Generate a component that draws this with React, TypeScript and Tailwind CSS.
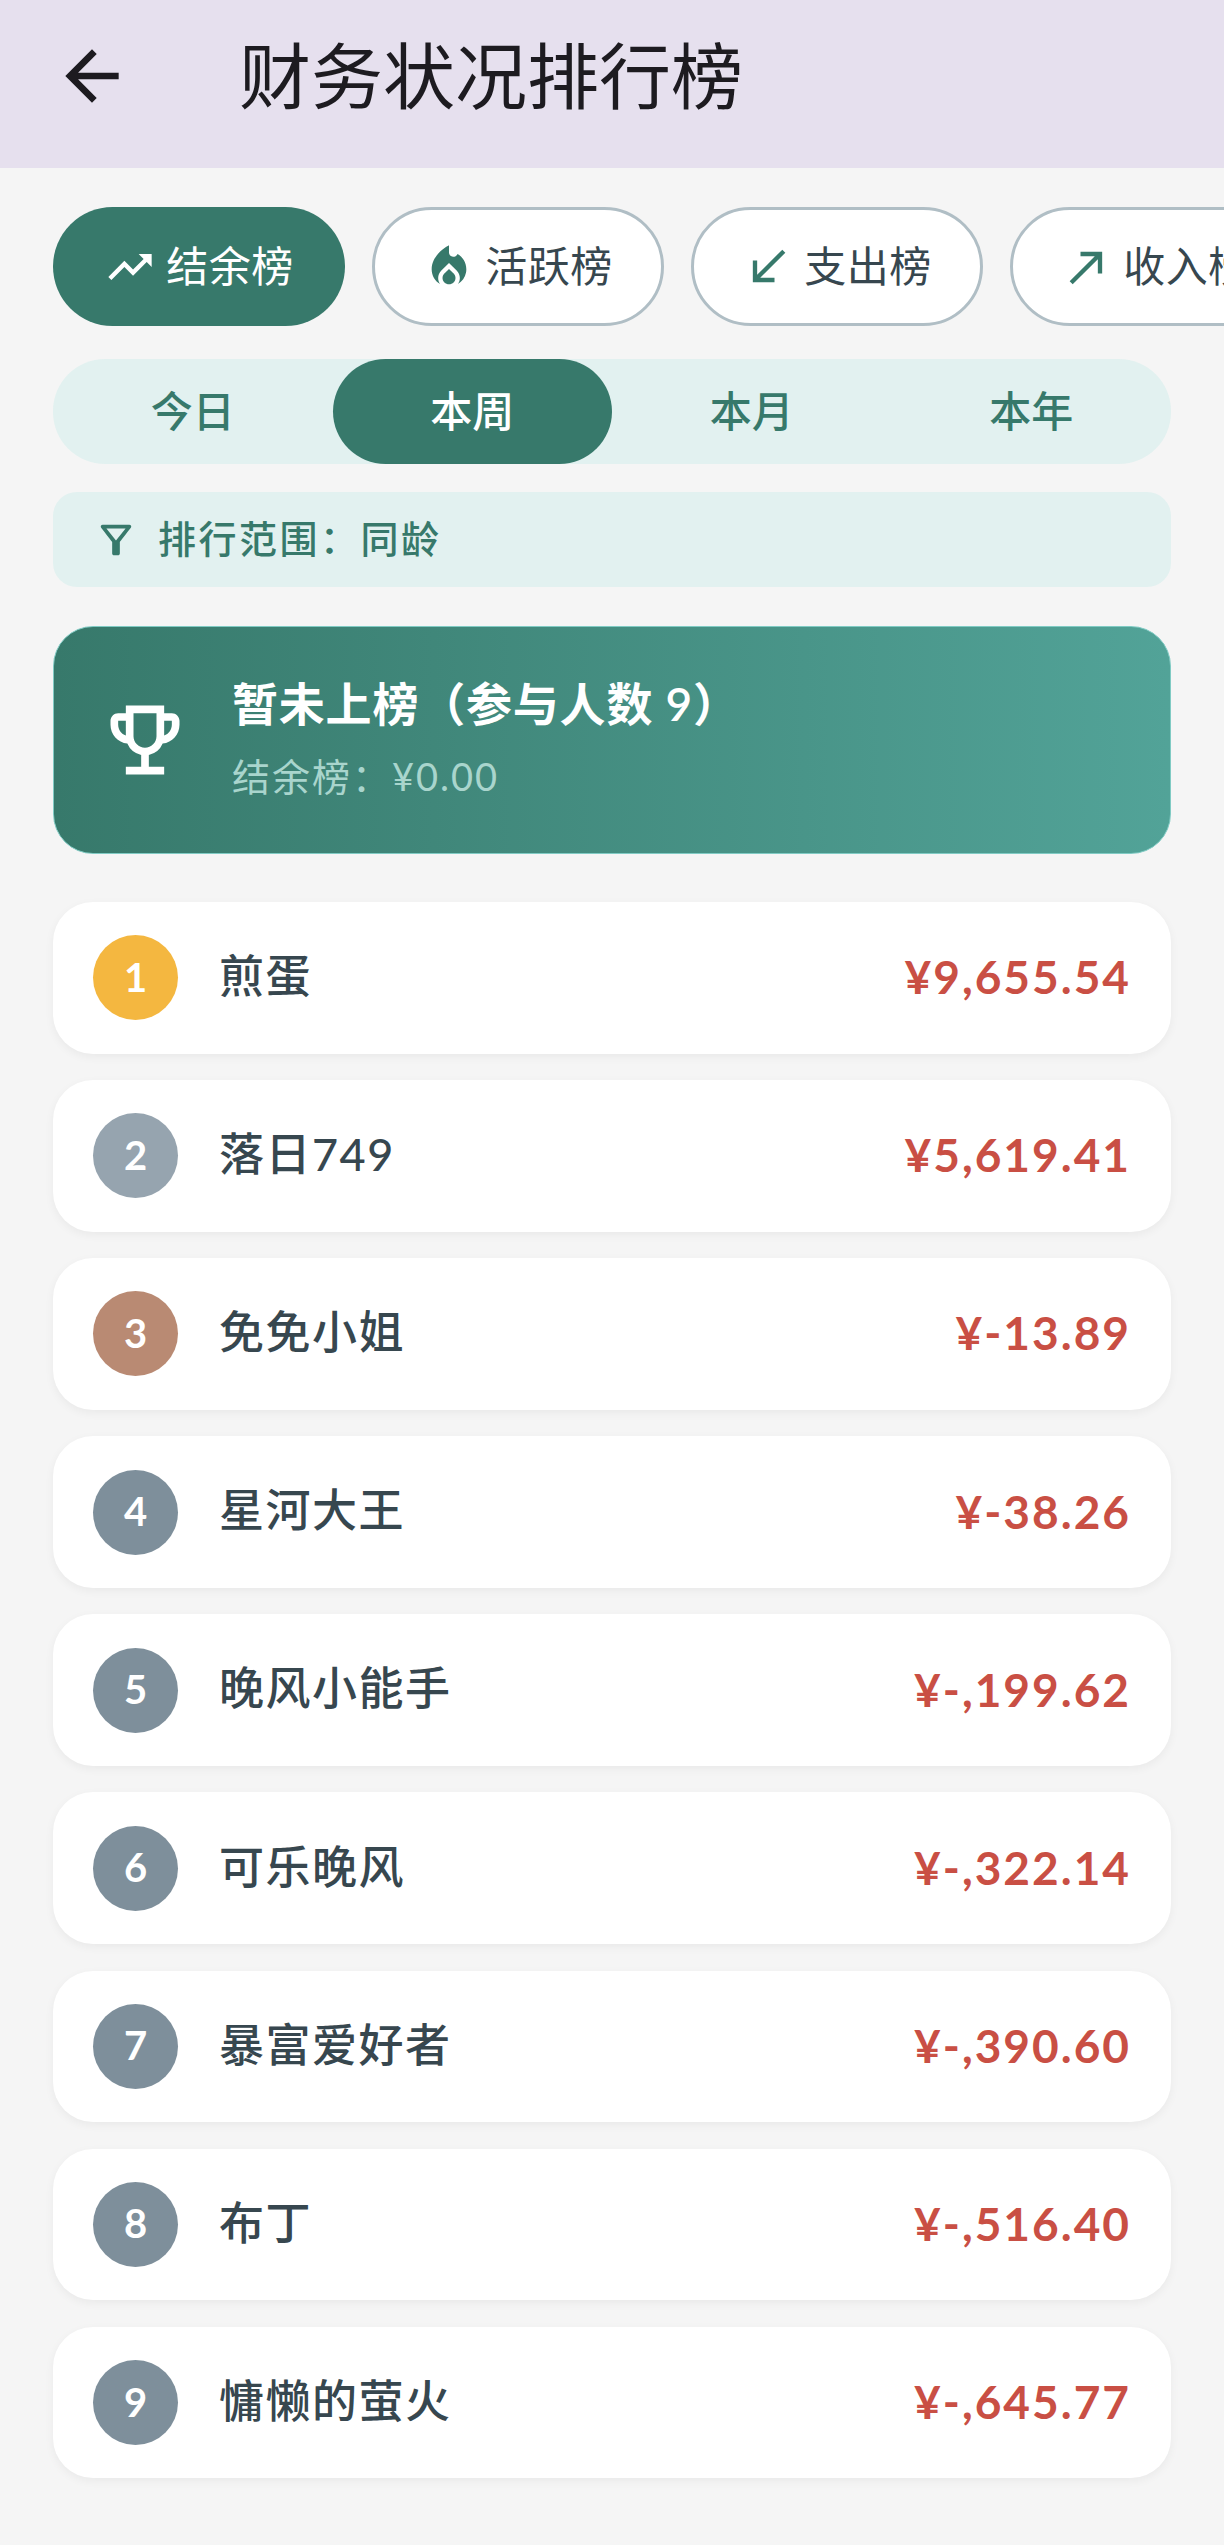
import {
  MdArrowBack,
  MdLocalFireDepartment,
  MdNorthEast,
  MdOutlineEmojiEvents,
  MdOutlineFilterAlt,
  MdSouthWest,
  MdTrendingUp,
} from "react-icons/md";

const tabs = [
  { label: "结余榜", icon: MdTrendingUp, active: true },
  { label: "活跃榜", icon: MdLocalFireDepartment, active: false },
  { label: "支出榜", icon: MdSouthWest, active: false },
  { label: "收入榜", icon: MdNorthEast, active: false },
];

const periods = ["今日", "本周", "本月", "本年"];

const rows = [
  { rank: 1, name: "煎蛋", amount: "¥9,655.54", color: "bg-[#f4b740]" },
  { rank: 2, name: "落日749", amount: "¥5,619.41", color: "bg-[#96a4af]" },
  { rank: 3, name: "免免小姐", amount: "¥-13.89", color: "bg-[#b98a73]" },
  { rank: 4, name: "星河大王", amount: "¥-38.26", color: "bg-[#7e8f9b]" },
  { rank: 5, name: "晚风小能手", amount: "¥-,199.62", color: "bg-[#7e8f9b]" },
  { rank: 6, name: "可乐晚风", amount: "¥-,322.14", color: "bg-[#7e8f9b]" },
  { rank: 7, name: "暴富爱好者", amount: "¥-,390.60", color: "bg-[#7e8f9b]" },
  { rank: 8, name: "布丁", amount: "¥-,516.40", color: "bg-[#7e8f9b]" },
  { rank: 9, name: "慵懒的萤火", amount: "¥-,645.77", color: "bg-[#7e8f9b]" },
];

export default function App() {
  return (
    <div className="h-[2545px] bg-[#f5f5f5] overflow-hidden font-['Lato','Noto_Sans_CJK_SC',sans-serif]">
      <header className="h-[168px] bg-[#e6e0ee] flex items-center pl-[52px] pb-[16px]">
        <MdArrowBack className="w-[80px] h-[80px] text-[#1d1b20] shrink-0" />
        <h1 className="ml-[107px] text-[72px] leading-none text-[#1d1b20] pb-[2px]">财务状况排行榜</h1>
      </header>

      <div className="flex gap-[27px] pl-[53px] pt-[39px] w-[1224px] overflow-hidden">
        {tabs.map((tab) => (
          <div
            key={tab.label}
            className={`w-[292px] h-[119px] shrink-0 rounded-full flex items-center justify-center gap-[10px] text-[42px] tracking-[0.5px] ${
              tab.active
                ? "bg-[#37796b] text-white"
                : "bg-white border-[3px] border-[#b0bec5] text-[#37474f]"
            }`}
          >
            <tab.icon className={`w-[52px] h-[52px] shrink-0 ${tab.active ? "text-white" : "text-[#37796b]"}`} />
            <span className="whitespace-nowrap">{tab.label}</span>
          </div>
        ))}
      </div>

      <div className="px-[53px]">
        <div className="mt-[33px] h-[105px] rounded-[52px] bg-[#e2f1f0] grid grid-cols-4">
          {periods.map((p) => (
            <div
              key={p}
              className={`flex items-center justify-center rounded-full text-[42px] font-medium ${
                p === "本周" ? "bg-[#37796b] text-white" : "text-[#37796b]"
              }`}
            >
              {p}
            </div>
          ))}
        </div>

        <div className="mt-[28px] h-[95px] rounded-[24px] bg-[#e2f1f0] flex items-center pl-[40px] gap-[19px] text-[#37796b] text-[38px] font-medium tracking-[2.5px]">
          <MdOutlineFilterAlt className="w-[46px] h-[46px] shrink-0" />
          <span className="pb-[3px]">排行范围：同龄</span>
        </div>

        <div className="mt-[39px] h-[228px] rounded-[40px] bg-gradient-to-r from-[#37796b] to-[#52a398] border border-[#80cbc4] flex items-center pl-[45px]">
          <MdOutlineEmojiEvents className="w-[92px] h-[92px] text-white shrink-0" />
          <div className="ml-[41px] pb-[6px]">
            <div className="text-[46px] leading-[64px] font-semibold text-white tracking-[0.8px]">暂未上榜（参与人数 9）</div>
            <div className="mt-[14px] text-[38px] leading-[52px] font-normal text-[#a9d5cd] tracking-[2px]">结余榜：¥0.00</div>
          </div>
        </div>

        <div className="mt-[48px] flex flex-col gap-[26.5px]">
          {rows.map((row) => (
            <div
              key={row.rank}
              className="h-[151.6px] rounded-[40px] bg-white shadow-[0_3px_10px_rgba(0,0,0,0.05)] flex items-center px-[40px]"
            >
              <div className={`w-[85px] h-[85px] rounded-full flex items-center justify-center text-white text-[40px] font-bold pb-[2px] ${row.color}`}>
                {row.rank}
              </div>
              <div className="ml-[41px] flex-1 text-[45px] font-medium tracking-[1.5px] text-[#37474f] pb-[2px]">{row.name}</div>
              <div className="text-[46px] font-bold tracking-[2px] text-[#c94f44] pb-[2px]">{row.amount}</div>
            </div>
          ))}
        </div>
      </div>
    </div>
  );
}
